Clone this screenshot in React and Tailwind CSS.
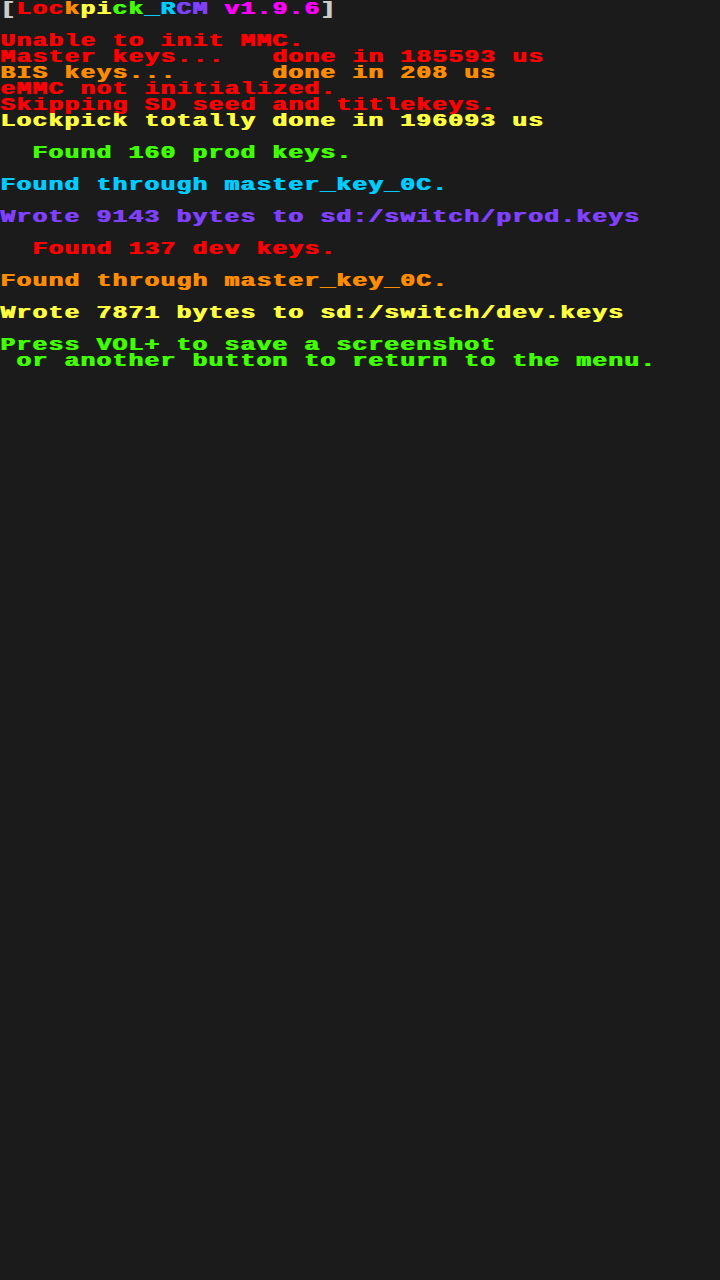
import React from "react";

const RED = "text-[#ff0000]";
const ORANGE = "text-[#ff8c00]";
const YELLOW = "text-[#ffff40]";
const GREEN = "text-[#40ff00]";
const CYAN = "text-[#00ccff]";
const PURPLE = "text-[#8040ff]";

const lines = [
  null,
  ["Unable to init MMC.", RED],
  ["Master keys...   done in 185593 us", RED],
  ["BIS keys...      done in 208 us", ORANGE],
  ["eMMC not initialized.", RED],
  ["Skipping SD seed and titlekeys.", RED],
  ["Lockpick totally done in 196093 us", YELLOW],
  null,
  ["  Found 160 prod keys.", GREEN],
  null,
  ["Found through master_key_0C.", CYAN],
  null,
  ["Wrote 9143 bytes to sd:/switch/prod.keys", PURPLE],
  null,
  ["  Found 137 dev keys.", RED],
  null,
  ["Found through master_key_0C.", ORANGE],
  null,
  ["Wrote 7871 bytes to sd:/switch/dev.keys", YELLOW],
  null,
  ["Press VOL+ to save a screenshot", GREEN],
  [" or another button to return to the menu.", GREEN],
];

const title = [
  ["[", "text-[#cccccc]"],
  ["L", RED],
  ["o", RED],
  ["c", RED],
  ["k", ORANGE],
  ["p", YELLOW],
  ["i", YELLOW],
  ["c", GREEN],
  ["k", GREEN],
  ["_", CYAN],
  ["R", CYAN],
  ["C", PURPLE],
  ["M", PURPLE],
  [" v1.9.6", "text-[#ff00ff]"],
  ["]", "text-[#cccccc]"],
];

export default function App() {
  return (
    <div className="min-h-screen w-full bg-[#1b1b1b] pt-px">
      {/* console text: chunky monospace stretched to 16px cells */}
      <div className="w-max origin-top-left scale-x-[1.3] font-['Liberation_Mono',monospace] font-bold text-[19px] leading-[16px] tracking-[0.9px] whitespace-pre [text-shadow:1px_0_0_currentColor]">
        <div>
          {title.map(([t, c], i) => (
            <span key={i} className={c}>{t}</span>
          ))}
        </div>
        {lines.map((l, i) =>
          l ? (
            <div key={i} className={l[1]}>{l[0]}</div>
          ) : (
            <div key={i} className="h-4" />
          )
        )}
      </div>
    </div>
  );
}
